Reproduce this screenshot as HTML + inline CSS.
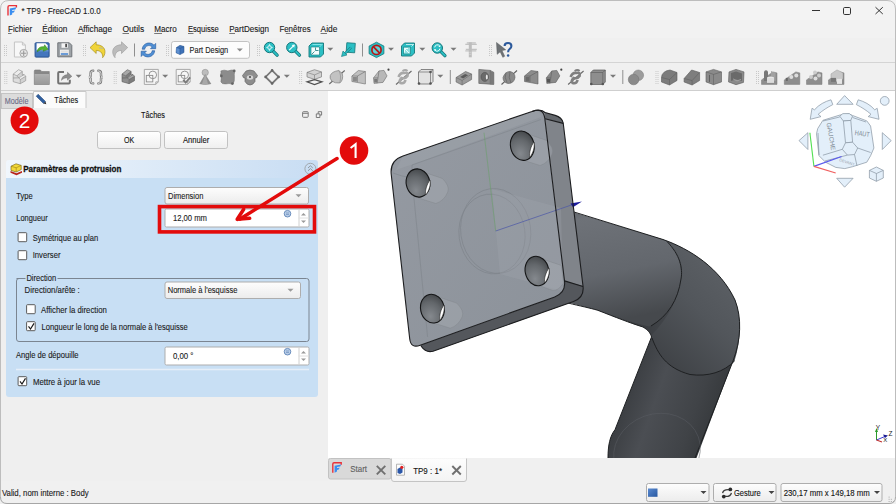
<!DOCTYPE html>
<html><head><meta charset="utf-8"><style>
html,body{margin:0;padding:0;width:896px;height:504px;overflow:hidden;background:#f0f0f0;font-family:"Liberation Sans",sans-serif;}
svg text{font-family:"Liberation Sans",sans-serif;}
</style></head><body>
<svg width="896" height="504" viewBox="0 0 896 504" style="position:absolute;left:0;top:0" font-family="Liberation Sans, sans-serif"><rect x="0" y="0" width="896" height="504" fill="#f0f0f0" />
<rect x="0" y="0" width="896" height="20" fill="#f3f3f3" />
<rect x="0" y="20" width="896" height="18" fill="#f2f2f2" />
<rect x="0" y="38" width="896" height="52" fill="#f0f0f0" />
<line x1="0" y1="62.5" x2="896" y2="62.5" stroke="#d4d4d4" stroke-width="1" />
<line x1="0" y1="90.5" x2="896" y2="90.5" stroke="#cfcfcf" stroke-width="1" />
<rect x="0" y="91" width="328" height="390" fill="#efefef" />
<rect x="328" y="91" width="567" height="367" fill="#ffffff" />
<path d="M0.5,497 L0.5,9 Q0.5,0.5 9,0.5 L887,0.5 Q895.5,0.5 895.5,9 L895.5,497" fill="none" stroke="#bdbdbd" stroke-width="1"/>
<path d="M0.5,497 Q0.5,503.5 7,503.5 L889,503.5 Q895.5,503.5 895.5,497" fill="none" stroke="#a6a6a6" stroke-width="1"/>
<g transform="translate(0,0)"><path d="M8,15.6 V6.9 Q8,5.6 9.3,5.6 H16.4 V7.6" fill="none" stroke="#e8323a" stroke-width="1.4"/><path d="M9.8,15.6 L9.8,8.6 L16.4,7.2 L15.4,9.4 L12.2,9.9 V10.9 L14.9,10.5 L13.9,12.4 L12.2,12.8 V14.4 Z" fill="#3a8ef0"/></g>
<text x="21.4" y="14" textLength="79.3" lengthAdjust="spacingAndGlyphs" font-size="9.6" font-weight="normal" fill="#1a1a1a" stroke="#1a1a1a" stroke-width="0.12">* TP9 - FreeCAD 1.0.0</text>
<line x1="812" y1="10.5" x2="820" y2="10.5" stroke="#333" stroke-width="1" />
<rect x="843.5" y="7.5" width="7" height="7" fill="none" stroke="#333" stroke-width="1" rx="1.2" />
<line x1="875.5" y1="7.2" x2="882.8" y2="14" stroke="#333" stroke-width="1" />
<line x1="882.8" y1="7.2" x2="875.5" y2="14" stroke="#333" stroke-width="1" />
<text x="8" y="31.9" textLength="24.1" lengthAdjust="spacingAndGlyphs" font-size="8.9" font-weight="normal" fill="#1a1a1a" stroke="#1a1a1a" stroke-width="0.12">Fichier</text>
<text x="42.2" y="31.9" textLength="25.1" lengthAdjust="spacingAndGlyphs" font-size="8.9" font-weight="normal" fill="#1a1a1a" stroke="#1a1a1a" stroke-width="0.12">Édition</text>
<text x="77.9" y="31.9" textLength="34.1" lengthAdjust="spacingAndGlyphs" font-size="8.9" font-weight="normal" fill="#1a1a1a" stroke="#1a1a1a" stroke-width="0.12">Affichage</text>
<text x="122.5" y="31.9" textLength="21.7" lengthAdjust="spacingAndGlyphs" font-size="8.9" font-weight="normal" fill="#1a1a1a" stroke="#1a1a1a" stroke-width="0.12">Outils</text>
<text x="154.2" y="31.9" textLength="22.5" lengthAdjust="spacingAndGlyphs" font-size="8.9" font-weight="normal" fill="#1a1a1a" stroke="#1a1a1a" stroke-width="0.12">Macro</text>
<text x="188" y="31.9" textLength="30.8" lengthAdjust="spacingAndGlyphs" font-size="8.9" font-weight="normal" fill="#1a1a1a" stroke="#1a1a1a" stroke-width="0.12">Esquisse</text>
<text x="229.2" y="31.9" textLength="39.8" lengthAdjust="spacingAndGlyphs" font-size="8.9" font-weight="normal" fill="#1a1a1a" stroke="#1a1a1a" stroke-width="0.12">PartDesign</text>
<text x="279.4" y="31.9" textLength="31.2" lengthAdjust="spacingAndGlyphs" font-size="8.9" font-weight="normal" fill="#1a1a1a" stroke="#1a1a1a" stroke-width="0.12">Fenêtres</text>
<text x="320.6" y="31.9" textLength="16.7" lengthAdjust="spacingAndGlyphs" font-size="8.9" font-weight="normal" fill="#1a1a1a" stroke="#1a1a1a" stroke-width="0.12">Aide</text>
<line x1="8" y1="33.5" x2="11.5" y2="33.5" stroke="#6a6a6a" stroke-width="0.9" />
<line x1="42.2" y1="33.5" x2="47.5" y2="33.5" stroke="#6a6a6a" stroke-width="0.9" />
<line x1="77.9" y1="33.5" x2="84" y2="33.5" stroke="#6a6a6a" stroke-width="0.9" />
<line x1="122.5" y1="33.5" x2="129" y2="33.5" stroke="#6a6a6a" stroke-width="0.9" />
<line x1="154.2" y1="33.5" x2="162" y2="33.5" stroke="#6a6a6a" stroke-width="0.9" />
<line x1="188" y1="33.5" x2="193.5" y2="33.5" stroke="#6a6a6a" stroke-width="0.9" />
<line x1="229.2" y1="33.5" x2="235" y2="33.5" stroke="#6a6a6a" stroke-width="0.9" />
<line x1="285.8" y1="33.5" x2="290.8" y2="33.5" stroke="#6a6a6a" stroke-width="0.9" />
<line x1="320.6" y1="33.5" x2="327" y2="33.5" stroke="#6a6a6a" stroke-width="0.9" />
<rect x="4" y="45" width="1" height="1" fill="#c8c8c8" />
<rect x="6" y="45" width="1" height="1" fill="#c8c8c8" />
<rect x="4" y="47" width="1" height="1" fill="#c8c8c8" />
<rect x="6" y="47" width="1" height="1" fill="#c8c8c8" />
<rect x="4" y="49" width="1" height="1" fill="#c8c8c8" />
<rect x="6" y="49" width="1" height="1" fill="#c8c8c8" />
<rect x="4" y="51" width="1" height="1" fill="#c8c8c8" />
<rect x="6" y="51" width="1" height="1" fill="#c8c8c8" />
<rect x="4" y="53" width="1" height="1" fill="#c8c8c8" />
<rect x="6" y="53" width="1" height="1" fill="#c8c8c8" />
<rect x="4" y="55" width="1" height="1" fill="#c8c8c8" />
<rect x="6" y="55" width="1" height="1" fill="#c8c8c8" />
<rect x="83" y="45" width="1" height="1" fill="#c8c8c8" />
<rect x="85" y="45" width="1" height="1" fill="#c8c8c8" />
<rect x="83" y="47" width="1" height="1" fill="#c8c8c8" />
<rect x="85" y="47" width="1" height="1" fill="#c8c8c8" />
<rect x="83" y="49" width="1" height="1" fill="#c8c8c8" />
<rect x="85" y="49" width="1" height="1" fill="#c8c8c8" />
<rect x="83" y="51" width="1" height="1" fill="#c8c8c8" />
<rect x="85" y="51" width="1" height="1" fill="#c8c8c8" />
<rect x="83" y="53" width="1" height="1" fill="#c8c8c8" />
<rect x="85" y="53" width="1" height="1" fill="#c8c8c8" />
<rect x="83" y="55" width="1" height="1" fill="#c8c8c8" />
<rect x="85" y="55" width="1" height="1" fill="#c8c8c8" />
<rect x="166" y="45" width="1" height="1" fill="#c8c8c8" />
<rect x="168" y="45" width="1" height="1" fill="#c8c8c8" />
<rect x="166" y="47" width="1" height="1" fill="#c8c8c8" />
<rect x="168" y="47" width="1" height="1" fill="#c8c8c8" />
<rect x="166" y="49" width="1" height="1" fill="#c8c8c8" />
<rect x="168" y="49" width="1" height="1" fill="#c8c8c8" />
<rect x="166" y="51" width="1" height="1" fill="#c8c8c8" />
<rect x="168" y="51" width="1" height="1" fill="#c8c8c8" />
<rect x="166" y="53" width="1" height="1" fill="#c8c8c8" />
<rect x="168" y="53" width="1" height="1" fill="#c8c8c8" />
<rect x="166" y="55" width="1" height="1" fill="#c8c8c8" />
<rect x="168" y="55" width="1" height="1" fill="#c8c8c8" />
<rect x="257" y="45" width="1" height="1" fill="#c8c8c8" />
<rect x="259" y="45" width="1" height="1" fill="#c8c8c8" />
<rect x="257" y="47" width="1" height="1" fill="#c8c8c8" />
<rect x="259" y="47" width="1" height="1" fill="#c8c8c8" />
<rect x="257" y="49" width="1" height="1" fill="#c8c8c8" />
<rect x="259" y="49" width="1" height="1" fill="#c8c8c8" />
<rect x="257" y="51" width="1" height="1" fill="#c8c8c8" />
<rect x="259" y="51" width="1" height="1" fill="#c8c8c8" />
<rect x="257" y="53" width="1" height="1" fill="#c8c8c8" />
<rect x="259" y="53" width="1" height="1" fill="#c8c8c8" />
<rect x="257" y="55" width="1" height="1" fill="#c8c8c8" />
<rect x="259" y="55" width="1" height="1" fill="#c8c8c8" />
<rect x="489" y="45" width="1" height="1" fill="#c8c8c8" />
<rect x="491" y="45" width="1" height="1" fill="#c8c8c8" />
<rect x="489" y="47" width="1" height="1" fill="#c8c8c8" />
<rect x="491" y="47" width="1" height="1" fill="#c8c8c8" />
<rect x="489" y="49" width="1" height="1" fill="#c8c8c8" />
<rect x="491" y="49" width="1" height="1" fill="#c8c8c8" />
<rect x="489" y="51" width="1" height="1" fill="#c8c8c8" />
<rect x="491" y="51" width="1" height="1" fill="#c8c8c8" />
<rect x="489" y="53" width="1" height="1" fill="#c8c8c8" />
<rect x="491" y="53" width="1" height="1" fill="#c8c8c8" />
<rect x="489" y="55" width="1" height="1" fill="#c8c8c8" />
<rect x="491" y="55" width="1" height="1" fill="#c8c8c8" />
<line x1="134.5" y1="43.5" x2="134.5" y2="56.5" stroke="#8f8f8f" stroke-width="1" />
<line x1="362.5" y1="43.5" x2="362.5" y2="56.5" stroke="#8f8f8f" stroke-width="1" />
<g transform="translate(13.9,41.5)"><path d="M0.5,0.5 h8 l3,3 v12 h-11z" fill="#f7f7f7" stroke="#c4c4c4"/><path d="M8.5,0.5 v3 h3" fill="none" stroke="#c4c4c4"/><circle cx="9.8" cy="11.7" r="3.8" fill="#e8e8e8" stroke="#a8a8a8"/><path d="M9.8,9 v5.4 M7.1,11.7 h5.4" stroke="#9a9a9a" stroke-width="1.1"/></g>
<g transform="translate(34.6,42.3)"><rect x="0.5" y="0.5" width="14" height="14.3" fill="#4476bd" stroke="#27518f" rx="0.8"/><path d="M2,1 h9 l2,2 v5 h-11z" fill="#ffffff"/><path d="M1,8.6 h13" stroke="#6a9ad6"/><path d="M2.5,8.5 q2,-5 7,-4 l0.5,-2 l3.5,4.5 l-5,2 l0.5,-1.8 q-3,-0.5 -6.5,2.3z" fill="#52b432" stroke="#2f7a1a" stroke-width="0.5"/></g>
<g transform="translate(57.3,42.3)"><path d="M0.5,0.5 h11.5 l2.5,2.5 v11.5 h-14z" fill="#9ea3a7" stroke="#6f7478"/><rect x="4.2" y="1" width="6.3" height="4.5" fill="#f4f4f4"/><rect x="8" y="1.5" width="1.6" height="3.4" fill="#3c3c3c"/><rect x="2.7" y="7.4" width="8.8" height="5.3" fill="#f2f2f2"/><rect x="3.5" y="10.9" width="7.3" height="1.6" fill="#4a86d0"/><path d="M3.5,8.8 h7 M3.5,9.8 h7" stroke="#c8c8c8" stroke-width="0.5"/></g>
<g transform="translate(90,41.8)"><path d="M0,5.8 L6.2,0 V3 C11,3 15,5.5 15,10 C15,12.5 14,14.5 12.6,15.9 C13,12.5 11.5,8.8 6.2,8.6 V11.7Z" fill="#f0d43a" stroke="#9c8412" stroke-width="0.6"/><path d="M9,6 l4,0.5" stroke="#b8b8a0" stroke-width="1"/></g>
<g transform="translate(111.8,41.8)"><path d="M15.9,5.8 L9.7,0 V3 C4.9,3 0.9,5.5 0.9,10 C0.9,12.5 1.9,14.5 3.3,15.9 C2.9,12.5 4.4,8.8 9.7,8.6 V11.7Z" fill="#bcbcbc" stroke="#9a9a9a" stroke-width="0.6"/></g>
<g transform="translate(141,42.2)"><path d="M1.2,7 C1.5,3 5,0.5 8.5,0.8 C10.5,1 12,1.8 13,3 L14.7,1.2 V6.5 H9.5 L11.2,4.8 C10,3.6 8.5,3.2 7.2,3.4 C5,3.8 3.8,5.5 3.8,7Z" fill="#4f8fd4" stroke="#23589e" stroke-width="0.6"/><path d="M13.7,8.5 C13.4,12.5 9.9,15 6.4,14.7 C4.4,14.5 2.9,13.7 1.9,12.5 L0.2,14.3 V9 H5.4 L3.7,10.7 C4.9,11.9 6.4,12.3 7.7,12.1 C9.9,11.7 11.1,10 11.1,8.5Z" fill="#4f8fd4" stroke="#23589e" stroke-width="0.6"/></g>
<rect x="171.5" y="41.5" width="78" height="16.8" fill="#fcfcfc" stroke="#c2c2c2" stroke-width="1" rx="2.2" />
<g transform="translate(175.5,45)"><path d="M1,2.5 L4.5,0.3 L8.5,1.5 V7.5 L4.5,9.6 L0.5,7.8Z" fill="#3f72b8" stroke="#24508a" stroke-width="0.5"/><path d="M4.5,3.5 L8.5,1.5 M4.5,3.5 V9.6 M4.5,3.5 L1,2.5" stroke="#2a5a9a" stroke-width="0.6" fill="none"/><path d="M1,3 L4,4 V9 L1,7.5z" fill="#5d8fd0"/></g>
<text x="189.6" y="53" textLength="38.6" lengthAdjust="spacingAndGlyphs" font-size="9.6" font-weight="normal" fill="#1a1a1a" stroke="#1a1a1a" stroke-width="0.12">Part Design</text>
<path d="M236.8,48.5 h6 l-3,3z" fill="#8a8a8a"/>
<g transform="translate(263.9,41.9)"><path d="M8.5,8.5 L13.2,13.2" stroke="#16777b" stroke-width="3.4" stroke-linecap="round"/><path d="M8.5,8.5 L13.2,13.2" stroke="#2bbfc4" stroke-width="1.8" stroke-linecap="round"/><circle cx="5.6" cy="5.6" r="5.2" fill="#2bbfc4" stroke="#16777b" stroke-width="1"/><path d="M5.6,2.2 l1.3,1.6 h-2.6z M5.6,9 l1.3,-1.6 h-2.6z M2.2,5.6 l1.6,1.3 v-2.6z M9,5.6 l-1.6,1.3 v-2.6z" fill="#e4fbfb"/><circle cx="5.6" cy="5.6" r="1.6" fill="none" stroke="#e4fbfb" stroke-width="0.8"/></g>
<g transform="translate(286.2,41.9)"><path d="M8.5,8.5 L13.2,13.2" stroke="#16777b" stroke-width="3.4" stroke-linecap="round"/><path d="M8.5,8.5 L13.2,13.2" stroke="#2bbfc4" stroke-width="1.8" stroke-linecap="round"/><circle cx="5.6" cy="5.6" r="5.2" fill="#2bbfc4" stroke="#16777b" stroke-width="1"/><path d="M3,8.2 L8,3.2" stroke="#f0ffff" stroke-width="1.2"/><path d="M8.6,2.6 l-3.2,0.6 l2.6,2.6z" fill="#f0ffff"/></g>
<g transform="translate(308.5,42.5)"><path d="M0.5,3.5 L3.5,0.5 H15 V11.5 L12,14.5 H0.5Z" fill="#2bbfc4" stroke="#16777b" stroke-width="0.9"/><path d="M2.5,4.5 H11 V12.5 H2.5Z" fill="#f2fdfd" stroke="#16777b" stroke-width="0.6"/><path d="M3,12 L6,9 M7,5 V8 H10" stroke="#16777b" stroke-width="0.8" fill="none"/><path d="M11,4.5 L14,1.5 M4,2 H13" stroke="#bff" stroke-width="0.6"/></g>
<path d="M327.3,47.7 h6 l-3,3z" fill="#7a7a7a"/>
<g transform="translate(341.5,42.5)"><path d="M5,0.5 H13.5 V10 H5z" fill="#2bbfc4" stroke="#16777b" stroke-width="0.8" transform="rotate(4 9 5)"/><path d="M9.5,5 L2.5,12" stroke="#16777b" stroke-width="2.4"/><path d="M9.5,5 L2.5,12" stroke="#2bbfc4" stroke-width="1.2"/><path d="M0,14 L1.5,8.5 L5.5,12.5Z" fill="#2bbfc4" stroke="#16777b" stroke-width="0.6"/></g>
<g transform="translate(368.7,41.9)"><path d="M7.8,0.3 L15.2,4.2 V11.8 L7.8,15.7 L0.4,11.8 V4.2Z" fill="#2bbfc4" stroke="#16777b" stroke-width="0.8"/><circle cx="7.8" cy="8" r="4.6" fill="#5fd3d6" stroke="#b81616" stroke-width="1.7"/><path d="M4.6,4.8 L11,11.2" stroke="#b81616" stroke-width="1.7"/></g>
<path d="M388,47.7 h6 l-3,3z" fill="#7a7a7a"/>
<g transform="translate(401,42.5)"><path d="M0.5,3.5 L3.5,0.5 H13.5 V10.5 L10.5,13.5 H0.5Z" fill="#2bbfc4" stroke="#16777b" stroke-width="0.9"/><path d="M2.5,4.5 H9.5 V11.5 H2.5Z" fill="#8fe0e2" stroke="#16777b" stroke-width="0.6"/><path d="M3.5,6 L8,10.5 M3.5,10 L3.5,6 L7,6" stroke="#f2ffff" stroke-width="0.9" fill="none"/><path d="M10.5,4 L13,1.5 M5,2 H12" stroke="#f2ffff" stroke-width="0.7"/></g>
<path d="M419.3,47.7 h6 l-3,3z" fill="#7a7a7a"/>
<g transform="translate(431.7,42.4)"><path d="M8.5,8.5 L13.2,13.2" stroke="#16777b" stroke-width="3.4" stroke-linecap="round"/><path d="M8.5,8.5 L13.2,13.2" stroke="#2bbfc4" stroke-width="1.8" stroke-linecap="round"/><circle cx="5.6" cy="5.6" r="5.2" fill="#2bbfc4" stroke="#16777b" stroke-width="1"/><path d="M3,5 a2.8,2.8 0 0 1 5,-1.5 M8.2,6.2 a2.8,2.8 0 0 1 -5,1.5" stroke="#f0ffff" stroke-width="1" fill="none"/><path d="M8.6,2.5 v2 h-2z M2.6,8.7 v-2 h2z" fill="#f0ffff"/></g>
<path d="M450.5,47.7 h6 l-3,3z" fill="#7a7a7a"/>
<g transform="translate(464.8,41.3)"><path d="M2,1.5 h9 M0.5,3 h11.5 M1,8 h11 M0.5,9.5 h11" stroke="#c2c2c2" stroke-width="1.2"/><path d="M5.5,1 v15" stroke="#bdbdbd" stroke-width="3"/><path d="M4.5,11 h2 M4.5,13 h2" stroke="#e0e0e0" stroke-width="0.6"/></g>
<g transform="translate(496,42)"><path d="M0.5,0.5 L9.7,7.8 L6,8.6 L8.7,14.2 L6.8,15.3 L4.2,9.8 L1.2,12.3Z" fill="#6e7275" stroke="#575a5d" stroke-width="0.5"/></g>
<path d="M504.6,46 Q504.6,43 508,43 Q511.4,43 511.4,46 Q511.4,48 509.6,49 Q508.1,50 508.1,52.3" fill="none" stroke="#2d5a9c" stroke-width="2.1"/><circle cx="508.1" cy="55.4" r="1.25" fill="#2d5a9c"/>
<rect x="4.3" y="71" width="1" height="1" fill="#c8c8c8" />
<rect x="6.3" y="71" width="1" height="1" fill="#c8c8c8" />
<rect x="4.3" y="73" width="1" height="1" fill="#c8c8c8" />
<rect x="6.3" y="73" width="1" height="1" fill="#c8c8c8" />
<rect x="4.3" y="75" width="1" height="1" fill="#c8c8c8" />
<rect x="6.3" y="75" width="1" height="1" fill="#c8c8c8" />
<rect x="4.3" y="77" width="1" height="1" fill="#c8c8c8" />
<rect x="6.3" y="77" width="1" height="1" fill="#c8c8c8" />
<rect x="4.3" y="79" width="1" height="1" fill="#c8c8c8" />
<rect x="6.3" y="79" width="1" height="1" fill="#c8c8c8" />
<rect x="4.3" y="81" width="1" height="1" fill="#c8c8c8" />
<rect x="6.3" y="81" width="1" height="1" fill="#c8c8c8" />
<rect x="4.3" y="83" width="1" height="1" fill="#c8c8c8" />
<rect x="6.3" y="83" width="1" height="1" fill="#c8c8c8" />
<rect x="113.7" y="71" width="1" height="1" fill="#c8c8c8" />
<rect x="115.7" y="71" width="1" height="1" fill="#c8c8c8" />
<rect x="113.7" y="73" width="1" height="1" fill="#c8c8c8" />
<rect x="115.7" y="73" width="1" height="1" fill="#c8c8c8" />
<rect x="113.7" y="75" width="1" height="1" fill="#c8c8c8" />
<rect x="115.7" y="75" width="1" height="1" fill="#c8c8c8" />
<rect x="113.7" y="77" width="1" height="1" fill="#c8c8c8" />
<rect x="115.7" y="77" width="1" height="1" fill="#c8c8c8" />
<rect x="113.7" y="79" width="1" height="1" fill="#c8c8c8" />
<rect x="115.7" y="79" width="1" height="1" fill="#c8c8c8" />
<rect x="113.7" y="81" width="1" height="1" fill="#c8c8c8" />
<rect x="115.7" y="81" width="1" height="1" fill="#c8c8c8" />
<rect x="113.7" y="83" width="1" height="1" fill="#c8c8c8" />
<rect x="115.7" y="83" width="1" height="1" fill="#c8c8c8" />
<rect x="299.1" y="71" width="1" height="1" fill="#c8c8c8" />
<rect x="301.1" y="71" width="1" height="1" fill="#c8c8c8" />
<rect x="299.1" y="73" width="1" height="1" fill="#c8c8c8" />
<rect x="301.1" y="73" width="1" height="1" fill="#c8c8c8" />
<rect x="299.1" y="75" width="1" height="1" fill="#c8c8c8" />
<rect x="301.1" y="75" width="1" height="1" fill="#c8c8c8" />
<rect x="299.1" y="77" width="1" height="1" fill="#c8c8c8" />
<rect x="301.1" y="77" width="1" height="1" fill="#c8c8c8" />
<rect x="299.1" y="79" width="1" height="1" fill="#c8c8c8" />
<rect x="301.1" y="79" width="1" height="1" fill="#c8c8c8" />
<rect x="299.1" y="81" width="1" height="1" fill="#c8c8c8" />
<rect x="301.1" y="81" width="1" height="1" fill="#c8c8c8" />
<rect x="299.1" y="83" width="1" height="1" fill="#c8c8c8" />
<rect x="301.1" y="83" width="1" height="1" fill="#c8c8c8" />
<rect x="655.5" y="71" width="1" height="1" fill="#c8c8c8" />
<rect x="657.5" y="71" width="1" height="1" fill="#c8c8c8" />
<rect x="655.5" y="73" width="1" height="1" fill="#c8c8c8" />
<rect x="657.5" y="73" width="1" height="1" fill="#c8c8c8" />
<rect x="655.5" y="75" width="1" height="1" fill="#c8c8c8" />
<rect x="657.5" y="75" width="1" height="1" fill="#c8c8c8" />
<rect x="655.5" y="77" width="1" height="1" fill="#c8c8c8" />
<rect x="657.5" y="77" width="1" height="1" fill="#c8c8c8" />
<rect x="655.5" y="79" width="1" height="1" fill="#c8c8c8" />
<rect x="657.5" y="79" width="1" height="1" fill="#c8c8c8" />
<rect x="655.5" y="81" width="1" height="1" fill="#c8c8c8" />
<rect x="657.5" y="81" width="1" height="1" fill="#c8c8c8" />
<rect x="655.5" y="83" width="1" height="1" fill="#c8c8c8" />
<rect x="657.5" y="83" width="1" height="1" fill="#c8c8c8" />
<rect x="756" y="71" width="1" height="1" fill="#c8c8c8" />
<rect x="758" y="71" width="1" height="1" fill="#c8c8c8" />
<rect x="756" y="73" width="1" height="1" fill="#c8c8c8" />
<rect x="758" y="73" width="1" height="1" fill="#c8c8c8" />
<rect x="756" y="75" width="1" height="1" fill="#c8c8c8" />
<rect x="758" y="75" width="1" height="1" fill="#c8c8c8" />
<rect x="756" y="77" width="1" height="1" fill="#c8c8c8" />
<rect x="758" y="77" width="1" height="1" fill="#c8c8c8" />
<rect x="756" y="79" width="1" height="1" fill="#c8c8c8" />
<rect x="758" y="79" width="1" height="1" fill="#c8c8c8" />
<rect x="756" y="81" width="1" height="1" fill="#c8c8c8" />
<rect x="758" y="81" width="1" height="1" fill="#c8c8c8" />
<rect x="756" y="83" width="1" height="1" fill="#c8c8c8" />
<rect x="758" y="83" width="1" height="1" fill="#c8c8c8" />
<line x1="450.3" y1="70" x2="450.3" y2="84" stroke="#8f8f8f" stroke-width="1" />
<line x1="622.8" y1="70" x2="622.8" y2="84" stroke="#8f8f8f" stroke-width="1" />
<g transform="translate(12.9,69.5)"><path d="M0.3,4.6 L5.7,0.2 L9.4,1.9 L4,6.3Z" fill="#ececec"/><path d="M4,6.3 L9.4,1.9 V5.6 L5.9,8.3Z" fill="#d2d2d2"/><path d="M5.9,8.3 L11.3,5.0 L12.8,6.8 L7.4,10Z" fill="#ececec"/><path d="M7.4,10 L12.8,6.8 V11.2 L7.4,14.2Z" fill="#d2d2d2"/><path d="M0.3,4.6 L4,6.3 L5.9,8.3 L7.4,10 V14.2 L0.3,12.2Z" fill="#dedede"/><path d="M0.3,4.6 L5.7,0.2 L9.4,1.9 V5.6 L11.3,5.0 L12.8,6.8 V11.2 L7.4,14.2 L0.3,12.2Z M0.3,4.6 L4,6.3 L9.4,1.9 M4,6.3 L5.9,8.3 L11.3,5.0 M5.9,8.3 L7.4,10 L12.8,6.8 M7.4,10 V14.2 M0.3,8.5 L5.9,8.3" fill="none" stroke="#8a8a8a" stroke-width="0.6" stroke-linejoin="round"/></g>
<g transform="translate(33.8,69.5)"><defs><linearGradient id="fold" x1="0" x2="0" y1="0" y2="1"><stop offset="0" stop-color="#b0b0b0"/><stop offset="1" stop-color="#999"/></linearGradient></defs><path d="M0.5,1.5 Q0.5,0.5 1.5,0.5 H6.5 L8,2 H15.5 V15 H0.5Z" fill="#878787" stroke="#7a7a7a" stroke-width="0.6"/><path d="M0.8,4.5 H15.3 V14.8 H0.8z" fill="url(#fold)"/></g>
<g transform="translate(57,70.8)"><path d="M7,1.2 H2.2 Q1.2,1.2 1.2,2.2 V11.8 Q1.2,12.8 2.2,12.8 H11.8 Q12.8,12.8 12.8,11.8 V9" fill="none" stroke="#727272" stroke-width="2"/><path d="M4.5,9.5 C5,5.5 7.5,4 10.5,4 V1.5 L14.8,5.5 L10.5,9.3 V7 C8,7 6,7.7 4.5,9.5Z" fill="#8e8e8e" stroke="#6a6a6a" stroke-width="0.5"/></g>
<path d="M75.6,74.8 h6 l-3,3z" fill="#7a7a7a"/>
<path d="M93.2,70.8 Q90.6,70.8 90.6,73.2 V75.5 Q90.6,77 88.9,77.1 Q90.6,77.2 90.6,78.7 V81 Q90.6,83.4 93.2,83.4 M98.4,70.8 Q101,70.8 101,73.2 V75.5 Q101,77 102.7,77.1 Q101,77.2 101,78.7 V81 Q101,83.4 98.4,83.4" fill="none" stroke="#767676" stroke-width="2.4" stroke-linecap="round"/><path d="M93.2,70.8 Q90.6,70.8 90.6,73.2 V75.5 Q90.6,77 88.9,77.1 Q90.6,77.2 90.6,78.7 V81 Q90.6,83.4 93.2,83.4 M98.4,70.8 Q101,70.8 101,73.2 V75.5 Q101,77 102.7,77.1 Q101,77.2 101,78.7 V81 Q101,83.4 98.4,83.4" fill="none" stroke="#e6e6e6" stroke-width="0.9" stroke-linecap="round"/>
<g transform="translate(121.7,69.5)"><path d="M0.3,4.6 L5.7,0.2 L9.4,1.9 L4,6.3Z" fill="#a8a8a8"/><path d="M4,6.3 L9.4,1.9 V5.6 L5.9,8.3Z" fill="#7c7c7c"/><path d="M5.9,8.3 L11.3,5.0 L12.8,6.8 L7.4,10Z" fill="#a8a8a8"/><path d="M7.4,10 L12.8,6.8 V11.2 L7.4,14.2Z" fill="#7c7c7c"/><path d="M0.3,4.6 L4,6.3 L5.9,8.3 L7.4,10 V14.2 L0.3,12.2Z" fill="#8e8e8e"/><path d="M0.3,4.6 L5.7,0.2 L9.4,1.9 V5.6 L11.3,5.0 L12.8,6.8 V11.2 L7.4,14.2 L0.3,12.2Z M0.3,4.6 L4,6.3 L9.4,1.9 M4,6.3 L5.9,8.3 L11.3,5.0 M5.9,8.3 L7.4,10 L12.8,6.8 M7.4,10 V14.2 M0.3,8.5 L5.9,8.3" fill="none" stroke="#5a5a5a" stroke-width="0.6" stroke-linejoin="round"/></g>
<g transform="translate(143.8,68.9)"><path d="M0.5,0.5 H14.5 V13 L12,15.5 H0.5Z" fill="#f6f6f6" stroke="#a8a8a8"/><path d="M12,15.5 V13 H14.5" fill="none" stroke="#a8a8a8"/><rect x="2.5" y="6.5" width="6.5" height="6.5" fill="none" stroke="#8c8c8c" stroke-width="0.9"/><circle cx="9" cy="6" r="3.8" fill="none" stroke="#8c8c8c" stroke-width="0.9"/></g>
<path d="M162.2,74.8 h6 l-3,3z" fill="#7a7a7a"/>
<g transform="translate(175.7,68.9)"><path d="M0.5,0.5 H14.5 V13 L12,15.5 H0.5Z" fill="#f6f6f6" stroke="#a8a8a8"/><path d="M12,15.5 V13 H14.5" fill="none" stroke="#a8a8a8"/><rect x="2.5" y="6.5" width="6.5" height="6.5" fill="none" stroke="#8c8c8c" stroke-width="0.9"/><circle cx="9" cy="6" r="3.8" fill="none" stroke="#8c8c8c" stroke-width="0.9"/><path d="M7.5,11 L10,13.8 L14.5,8.5" stroke="#7a7a7a" stroke-width="1.8" fill="none"/></g>
<g transform="translate(199,68.9)"><circle cx="6.2" cy="3.6" r="3.2" fill="#bdbdbd" stroke="#8a8a8a" stroke-width="0.5"/><path d="M6.2,5 L0.3,15 Q6.2,16.5 12.3,15Z" fill="#8f8f8f"/><path d="M6.2,5 L3,15 Q6.2,16 9,15Z" fill="#a8a8a8"/></g>
<g transform="translate(219.9,68.9)"><path d="M1,2 Q4,0.5 8,2 Q12,0.5 15,1.5 Q14,6 14.5,8 Q15,12 13,15.5 Q9,14 6,15 Q2,15.5 1,13 Q2,9 0.5,6 Q1.5,4 1,2Z" fill="#8c8c8c" stroke="#6e6e6e" stroke-width="0.5"/><circle cx="14.3" cy="2" r="1.3" fill="#666"/><circle cx="1.5" cy="7" r="1.3" fill="#666"/><circle cx="12.5" cy="14.6" r="1.3" fill="#666"/></g>
<g transform="translate(242,69.5)"><path d="M4,1.5 Q8,-0.5 12,1.5 L15.5,6 Q15,9 13,8.5 V12 Q11,15.5 8,15.5 Q5,15.5 3,12 V8.5 Q1,9 0.5,6Z" fill="#8e8e8e" stroke="#5c5c5c" stroke-width="0.6"/><ellipse cx="8" cy="8" rx="3.2" ry="2.2" fill="#d4d4d4"/><circle cx="8" cy="7.6" r="1" fill="#444"/></g>
<g transform="translate(264.1,68.9)"><path d="M8,1.5 L14.5,8 L8,14.5 L1.5,8Z" fill="none" stroke="#787878" stroke-width="1.8"/><circle cx="8" cy="1.5" r="1.3" fill="#666"/><circle cx="14.5" cy="8" r="1.3" fill="#666"/><circle cx="8" cy="14.5" r="1.3" fill="#666"/><circle cx="1.5" cy="8" r="1.3" fill="#666"/></g>
<path d="M283.8,74.8 h6 l-3,3z" fill="#7a7a7a"/>
<g transform="translate(306.5,68.9)"><path d="M0.5,3.5 L8,0.8 L15,3 V8 L8,10.5 L0.5,8Z" fill="#d2d2d2" stroke="#6a6a6a" stroke-width="0.6"/><path d="M0.5,3.5 L8,6 L15,3 M8,6 V10.5" stroke="#6a6a6a" stroke-width="0.5" fill="none"/><path d="M0.5,13 L8,10.8 L15.5,13 L8,15.7Z" fill="#f2f2f2" stroke="#505050" stroke-width="1.2"/></g>
<g transform="translate(328.75,69)"><path d="M0.5,15 L16,1.5" stroke="#6a6a6a" stroke-width="1.1"/><path d="M1.5,6.5 Q3,2.5 10,1.5 L13.5,4.5 Q15,11 11,14 Q6,14.5 3,12 Q0.5,9 1.5,6.5Z" fill="#c2c2c2" stroke="#707070" stroke-width="0.6"/><path d="M10,1.5 Q13,6 11,14" fill="none" stroke="#8a8a8a" stroke-width="0.6"/></g>
<g transform="translate(351.4,69.5)"><path d="M0.5,6.5 L7,1 L14,2 V14.5 L0.5,12Z" fill="#c0c0c0" stroke="#6c6c6c" stroke-width="0.6"/><path d="M0.5,6.5 H6 V12.5 M6,6.5 L14,2" stroke="#6c6c6c" stroke-width="0.6" fill="none"/><rect x="1.5" y="7.5" width="4" height="4.5" fill="#8a8a8a"/></g>
<g transform="translate(373,68.9)"><path d="M0.5,9 L6,2 L11,1.5 L14,7 L10,13.5 L1,14.5Z" fill="#b8b8b8" stroke="#6c6c6c" stroke-width="0.6"/><path d="M0.5,9 H5 L6,2 M5,9 L4,14.5" stroke="#6c6c6c" stroke-width="0.6" fill="none"/><rect x="1.2" y="10" width="3" height="3.5" fill="#7a7a7a"/><circle cx="15.5" cy="0.8" r="1.1" fill="#444"/></g>
<g transform="translate(395.5,69)"><path d="M0.5,15.5 L16,2" stroke="#6a6a6a" stroke-width="1.1"/><path d="M3,8 Q5,3 9,4 Q13,3 12,7 Q10,10 6,9 Q3,12 5,14 Q9,15 10,11" fill="none" stroke="#a8a8a8" stroke-width="2.6"/><path d="M7,2 Q10,0 12,2" fill="none" stroke="#a8a8a8" stroke-width="2"/></g>
<g transform="translate(418,69)"><path d="M0.5,3 L3,0.5 H15 V12.5 L12.5,15 H0.5Z" fill="#e2e2e2" stroke="#5a5a5a" stroke-width="0.7"/><path d="M0.5,3 H12.5 V15 M12.5,3 L15,0.5" stroke="#5a5a5a" stroke-width="0.6" fill="none"/><circle cx="1" cy="14.5" r="1.3" fill="#555"/><circle cx="12.5" cy="14.5" r="1.3" fill="#555"/><circle cx="12.5" cy="3" r="1.3" fill="#555"/></g>
<path d="M437.3,74.8 h6 l-3,3z" fill="#7a7a7a"/>
<g transform="translate(455.6,69.5)"><path d="M0.5,8 L10,2 L16,4.5 V10 L6.5,15.5 L0.5,12.5Z" fill="#9a9a9a" stroke="#5e5e5e" stroke-width="0.6"/><path d="M0.5,8 L6.5,11 L16,4.5 M6.5,11 V15.5" stroke="#5e5e5e" stroke-width="0.5" fill="none"/><path d="M4.5,7.5 L9.5,4.5 L12.5,5.8 L7.5,9Z" fill="#5a5a5a"/></g>
<g transform="translate(478.3,68.9)"><path d="M0.5,0.5 L12,1.5 L15.5,3.5 V15.5 L0.5,14.5Z" fill="#8c8c8c" stroke="#5a5a5a" stroke-width="0.6"/><path d="M12,1.5 V15.2" stroke="#5a5a5a" stroke-width="0.6"/><rect x="12" y="3" width="3.5" height="12.5" fill="#7a7a7a"/><ellipse cx="6.5" cy="8" rx="3.8" ry="4.5" fill="#6a6a6a" stroke="#505050" stroke-width="0.6"/><ellipse cx="8.5" cy="8" rx="1" ry="2.5" fill="#e8e8e8"/></g>
<g transform="translate(501,69.5)"><path d="M0.5,15 L16,1" stroke="#5e5e5e" stroke-width="1.1"/><path d="M2,8 Q4,2 9,2 Q14,3 14,8 Q13,14 7,14 Q2,13 2,8Z" fill="#8a8a8a" stroke="#5e5e5e" stroke-width="0.6"/><path d="M5,3 Q3,8 6,13 M9,2.3 Q7,8 10,13.5" fill="none" stroke="#5e5e5e" stroke-width="0.6"/></g>
<g transform="translate(524,69.5)"><path d="M0.5,6.5 L7,1 L14,2 V14.5 L0.5,12Z" fill="#8c8c8c" stroke="#5e5e5e" stroke-width="0.6"/><path d="M0.5,6.5 H6 V12.5 M6,6.5 L14,2" stroke="#5e5e5e" stroke-width="0.6" fill="none"/><rect x="1.5" y="7.5" width="4" height="4.5" fill="#6a6a6a"/></g>
<g transform="translate(545.8,68.9)"><path d="M0.5,9 L6,2 L11,1.5 L14,7 L10,13.5 L1,14.5Z" fill="#8a8a8a" stroke="#5e5e5e" stroke-width="0.6"/><path d="M0.5,9 H5 L6,2 M5,9 L4,14.5" stroke="#5e5e5e" stroke-width="0.6" fill="none"/><rect x="1.2" y="10" width="3" height="3.5" fill="#555"/><circle cx="15.5" cy="0.8" r="1.1" fill="#444"/></g>
<g transform="translate(567.6,69)"><path d="M0.5,15.5 L16,2" stroke="#6a6a6a" stroke-width="1.1"/><path d="M3,8 Q5,3 9,4 Q13,3 12,7 Q10,10 6,9 Q3,12 5,14 Q9,15 10,11" fill="none" stroke="#808080" stroke-width="2.6"/><path d="M7,2 Q10,0 12,2" fill="none" stroke="#808080" stroke-width="2"/></g>
<g transform="translate(590.3,69.5)"><path d="M0.5,3 L3,0.5 H15 V12.5 L12.5,15 H0.5Z" fill="#8e8e8e" stroke="#5a5a5a" stroke-width="0.7"/><path d="M0.5,3 H12.5 V15 M12.5,3 L15,0.5" stroke="#5a5a5a" stroke-width="0.6" fill="none"/><circle cx="1" cy="14.5" r="1.3" fill="#555"/><circle cx="12.5" cy="14.5" r="1.3" fill="#555"/></g>
<path d="M610,74.8 h6 l-3,3z" fill="#7a7a7a"/>
<g transform="translate(627.8,69.5)"><circle cx="10.5" cy="5.8" r="5.3" fill="#9c9c9c" stroke="#7a7a7a" stroke-width="0.5"/><circle cx="5.8" cy="10" r="5.3" fill="#8a8a8a" stroke="#6e6e6e" stroke-width="0.5"/></g>
<g transform="translate(661,69.5)"><path d="M0.5,8 Q1,1.5 9,0.5 L16,3 V11 L8.5,15.5 L0.5,12.5Z" fill="#7c7c7c" stroke="#5a5a5a" stroke-width="0.6"/><path d="M0.5,8 L8.5,10 L16,3 M8.5,10 V15.5" stroke="#5a5a5a" stroke-width="0.5" fill="none"/></g>
<g transform="translate(683.6,69.5)"><path d="M0.5,9 L8,0.5 L16,3 V11 L8.5,15.5 L0.5,12.5Z" fill="#7e7e7e" stroke="#5a5a5a" stroke-width="0.6"/><path d="M0.5,9 L8.5,11 L16,3 M8.5,11 V15.5" stroke="#5a5a5a" stroke-width="0.5" fill="none"/></g>
<g transform="translate(705.5,68.9)"><path d="M0.5,3 L8,0.5 L16,3 V13 L8,15.8 L0.5,13Z" fill="#8a8a8a" stroke="#5a5a5a" stroke-width="0.6"/><path d="M0.5,3 L8,5.5 L16,3 M8,5.5 V15.8" stroke="#5a5a5a" stroke-width="0.5" fill="none"/><path d="M4,6 V13" stroke="#555" stroke-width="0.8"/></g>
<g transform="translate(728,68.9)"><path d="M1,3 L8,0.5 L16,3 L15.5,13.5 L8,15.8 L0.5,13Z" fill="#8a8a8a" stroke="#5a5a5a" stroke-width="0.6"/><path d="M3,4 L8,2.5 L14,4.5 V12 L8,10.5 L3,12Z" fill="#6a6a6a"/><path d="M5,10 L9,12 L13,10.5" fill="none" stroke="#aaa" stroke-width="0.8"/></g>
<g transform="translate(761,68.9)"><path d="M0.5,11 L12,3 L16,4 V15.5 H0.5Z" fill="#8e8e8e" stroke="#7a7a7a" stroke-width="0.5"/><path d="M3,2.5 Q5,0 7,2.5 V12 H3Z" fill="#777"/><path d="M10,2 L14.5,4 V12 L10,11Z" fill="#a2a2a2"/><ellipse cx="9.5" cy="9" rx="3.5" ry="1.5" fill="#e8e8e8"/><rect x="6" y="9" width="7" height="5" fill="#dcdcdc"/></g>
<g transform="translate(783.8,68.9)"><path d="M0.5,11 L12,3 L16,4 V15.5 H0.5Z" fill="#8e8e8e" stroke="#7a7a7a" stroke-width="0.5"/><circle cx="7.5" cy="8" r="2" fill="#ddd"/><circle cx="12.5" cy="6.5" r="2" fill="#ddd"/><rect x="2" y="9" width="2" height="3" fill="#666"/></g>
<g transform="translate(806,68.9)"><path d="M0.5,11 L12,3 L16,4 V15.5 H0.5Z" fill="#8e8e8e" stroke="#7a7a7a" stroke-width="0.5"/><circle cx="9" cy="3.5" r="2" fill="#ccc"/><circle cx="13" cy="6.5" r="2" fill="#ccc"/><circle cx="5" cy="8" r="2" fill="#ccc"/><circle cx="9.5" cy="9.5" r="2" fill="#ddd"/></g>
<g transform="translate(828,68.9)"><path d="M0.5,11 L12,3 L16,4 V15.5 H0.5Z" fill="#8e8e8e" stroke="#7a7a7a" stroke-width="0.5"/><path d="M3,5 L9,1 L15,4 V10 L9,13 L3,10Z" fill="#c8c8c8" stroke="#999" stroke-width="0.5"/><rect x="9" y="10" width="5" height="5" fill="#e6e6e6"/><rect x="3" y="9" width="5" height="4" fill="#777"/></g>
<rect x="1.5" y="93.5" width="31" height="15" fill="#dcdcdc" stroke="#c4c4c4" stroke-width="1" />
<text x="4.8" y="104" textLength="23.6" lengthAdjust="spacingAndGlyphs" font-size="9.8" font-weight="normal" fill="#6b6b86" stroke="#6b6b86" stroke-width="0.12">Modèle</text>
<path d="M33.5,108 V91.5 h52.5 V108" fill="#fbfbfb" stroke="#c9c9c9"/>
<path d="M36.2,96.2 L38.2,94.2 L45.5,101.5 L43.5,103.5Z" fill="#2f5f9f" stroke="#1d3f70" stroke-width="0.5"/><path d="M45.5,101.5 L46.3,104.3 L43.5,103.5Z" fill="#333"/>
<text x="54.2" y="102.6" textLength="23.9" lengthAdjust="spacingAndGlyphs" font-size="9.8" font-weight="normal" fill="#111" stroke="#111" stroke-width="0.12">Tâches</text>
<text x="140.9" y="117.6" textLength="24.1" lengthAdjust="spacingAndGlyphs" font-size="9.8" font-weight="normal" fill="#111" stroke="#111" stroke-width="0.12">Tâches</text>
<rect x="302.6" y="111.7" width="5.6" height="5.6" fill="none" stroke="#7a7a7a" stroke-width="1" rx="0.8" />
<line x1="302.6" y1="113.3" x2="308.2" y2="113.3" stroke="#7a7a7a" stroke-width="1" />
<path d="M316.3,113.9 h3.6 v3.6 h-3.6z M318.2,113.9 v-2.2 h3.4 v3.4 h-1.7" fill="none" stroke="#7a7a7a" stroke-width="1"/>
<defs><linearGradient id="btng" x1="0" x2="0" y1="0" y2="1"><stop offset="0" stop-color="#ffffff"/><stop offset="1" stop-color="#efefef"/></linearGradient></defs>
<rect x="97.5" y="131.5" width="63" height="17" fill="url(#btng)" stroke="#c2c2c2" stroke-width="1" rx="2.2" />
<text x="124" y="142.5" textLength="10.2" lengthAdjust="spacingAndGlyphs" font-size="9.8" font-weight="normal" fill="#111" stroke="#111" stroke-width="0.12">OK</text>
<rect x="164.5" y="131.5" width="63" height="17" fill="url(#btng)" stroke="#c2c2c2" stroke-width="1" rx="2.2" />
<text x="183" y="142.5" textLength="26.3" lengthAdjust="spacingAndGlyphs" font-size="9.8" font-weight="normal" fill="#111" stroke="#111" stroke-width="0.12">Annuler</text>
<defs><linearGradient id="hdr" x1="0" x2="1" y1="0" y2="0"><stop offset="0" stop-color="#f0f6fc"/><stop offset="1" stop-color="#c8ddf3"/></linearGradient></defs>
<path d="M6,178 V163 q0,-3 3,-3 H315 q3,0 3,3 V178z" fill="url(#hdr)"/>
<path d="M6,178 H318 V394 q0,3 -3,3 H9 q-3,0 -3,-3z" fill="#c8dff4"/>
<path d="M10.5,171 l6,2.3 l5.5,-2.3 v1.8 l-5.5,2.4 l-6,-2.4z" fill="#b8231c"/><path d="M11,166.2 l5,-2.4 l5.2,1.6 v4.2 l-5,2.4 l-5.2,-1.6z" fill="#f2d83a" stroke="#6e5a10" stroke-width="0.6"/><path d="M11,166.2 l5.2,1.6 l5,-2.4 M16.2,167.8 v4.2" fill="none" stroke="#8a7010" stroke-width="0.5"/>
<text x="23.2" y="171.7" textLength="98.3" lengthAdjust="spacingAndGlyphs" font-size="9.6" font-weight="bold" fill="#111" stroke="#111" stroke-width="0.3">Paramètres de protrusion</text>
<circle cx="310.4" cy="168.8" r="5.5" fill="none" stroke="#a2a8ae" stroke-width="1"/><path d="M308,168 l2.4,-2.2 l2.4,2.2 M308,170.8 l2.4,-2.2 l2.4,2.2" fill="none" stroke="#8a9096" stroke-width="0.9"/>
<text x="16.3" y="198.8" textLength="16.4" lengthAdjust="spacingAndGlyphs" font-size="9.8" font-weight="normal" fill="#1b1b1b" stroke="#1b1b1b" stroke-width="0.12">Type</text>
<text x="16.3" y="220.6" textLength="31.3" lengthAdjust="spacingAndGlyphs" font-size="9.8" font-weight="normal" fill="#1b1b1b" stroke="#1b1b1b" stroke-width="0.12">Longueur</text>
<rect x="18.1" y="232.7" width="8.6" height="9" fill="#ffffff" stroke="#5a5a5a" stroke-width="1" rx="0.8" />
<text x="32.7" y="240.5" textLength="65.5" lengthAdjust="spacingAndGlyphs" font-size="9.8" font-weight="normal" fill="#1b1b1b" stroke="#1b1b1b" stroke-width="0.12">Symétrique au plan</text>
<rect x="18.1" y="250.7" width="8.6" height="9" fill="#ffffff" stroke="#5a5a5a" stroke-width="1" rx="0.8" />
<text x="32.7" y="258" textLength="27.8" lengthAdjust="spacingAndGlyphs" font-size="9.8" font-weight="normal" fill="#1b1b1b" stroke="#1b1b1b" stroke-width="0.12">Inverser</text>
<defs><linearGradient id="cg187" x1="0" x2="0" y1="0" y2="1"><stop offset="0" stop-color="#fdfdfd"/><stop offset="1" stop-color="#ececec"/></linearGradient></defs>
<rect x="165.0" y="187.5" width="143.5" height="16.5" fill="url(#cg187)" stroke="#adadad" stroke-width="1" rx="2" />
<text x="168" y="199" textLength="35.3" lengthAdjust="spacingAndGlyphs" font-size="9.8" font-weight="normal" fill="#1b1b1b" stroke="#1b1b1b" stroke-width="0.12">Dimension</text>
<path d="M295.5,194.25 h6 l-3,3z" fill="#9a9a9a"/>
<rect x="165.0" y="209.0" width="144" height="18" fill="#ffffff" stroke="#adadad" stroke-width="1" rx="1.5" />
<line x1="299.0" y1="209.5" x2="299.0" y2="226.5" stroke="#d0d0d0" stroke-width="1" />
<line x1="298.5" y1="218.0" x2="308.5" y2="218.0" stroke="#e0e0e0" stroke-width="1" />
<path d="M301.0,215.5 l2.5,-2.5 l2.5,2.5z" fill="#9a9a9a"/><path d="M301.0,220.5 l2.5,2.5 l2.5,-2.5z" fill="#9a9a9a"/>
<circle cx="287.5" cy="213.7" r="3.3" fill="#b9cde6" stroke="#5f84b8" stroke-width="0.9"/><path d="M286.0,213.0 h3 M286.0,214.5 h3" stroke="#5f84b8" stroke-width="0.6"/>
<text x="172.9" y="220.8" textLength="34.1" lengthAdjust="spacingAndGlyphs" font-size="9.8" font-weight="normal" fill="#1b1b1b" stroke="#1b1b1b" stroke-width="0.12">12,00 mm</text>
<path d="M16.5,278.5 h9" stroke="#7b8591"/><path d="M57.5,278.5 H306.5 q2.5,0 2.5,2.5 V339 q0,2.5 -2.5,2.5 H19 q-2.5,0 -2.5,-2.5 V281 q0,-2.5 2.5,-2.5" fill="none" stroke="#7b8591"/>
<text x="26.4" y="280.7" textLength="29.8" lengthAdjust="spacingAndGlyphs" font-size="9.8" font-weight="normal" fill="#1b1b1b" stroke="#1b1b1b" stroke-width="0.12">Direction</text>
<text x="24.6" y="293.2" textLength="55.2" lengthAdjust="spacingAndGlyphs" font-size="9.8" font-weight="normal" fill="#1b1b1b" stroke="#1b1b1b" stroke-width="0.12">Direction/arête :</text>
<defs><linearGradient id="cg281" x1="0" x2="0" y1="0" y2="1"><stop offset="0" stop-color="#fdfdfd"/><stop offset="1" stop-color="#ececec"/></linearGradient></defs>
<rect x="165.0" y="282.0" width="135.5" height="16.5" fill="url(#cg281)" stroke="#adadad" stroke-width="1" rx="2" />
<text x="167.7" y="293.2" textLength="69.7" lengthAdjust="spacingAndGlyphs" font-size="9.8" font-weight="normal" fill="#1b1b1b" stroke="#1b1b1b" stroke-width="0.12">Normale à l'esquisse</text>
<path d="M287.5,288.75 h6 l-3,3z" fill="#9a9a9a"/>
<rect x="26.6" y="304.7" width="8.6" height="9" fill="#ffffff" stroke="#5a5a5a" stroke-width="1" rx="0.8" />
<text x="41" y="312.9" textLength="65.8" lengthAdjust="spacingAndGlyphs" font-size="9.8" font-weight="normal" fill="#1b1b1b" stroke="#1b1b1b" stroke-width="0.12">Afficher la direction</text>
<rect x="26.6" y="321.7" width="8.6" height="9" fill="#ffffff" stroke="#5a5a5a" stroke-width="1" rx="0.8" />
<path d="M28.5,326.4 l2,2.6 l3.5,-5.6" fill="none" stroke="#1a1a1a" stroke-width="1.2"/>
<text x="41.6" y="330.2" textLength="146.2" lengthAdjust="spacingAndGlyphs" font-size="9.8" font-weight="normal" fill="#1b1b1b" stroke="#1b1b1b" stroke-width="0.12">Longueur le long de la normale à l'esquisse</text>
<text x="16" y="358.2" textLength="62.6" lengthAdjust="spacingAndGlyphs" font-size="9.8" font-weight="normal" fill="#1b1b1b" stroke="#1b1b1b" stroke-width="0.12">Angle de dépouille</text>
<rect x="165.0" y="347.0" width="144" height="18" fill="#ffffff" stroke="#adadad" stroke-width="1" rx="1.5" />
<line x1="299.0" y1="347.5" x2="299.0" y2="364.5" stroke="#d0d0d0" stroke-width="1" />
<line x1="298.5" y1="356.0" x2="308.5" y2="356.0" stroke="#e0e0e0" stroke-width="1" />
<path d="M301.0,353.5 l2.5,-2.5 l2.5,2.5z" fill="#9a9a9a"/><path d="M301.0,358.5 l2.5,2.5 l2.5,-2.5z" fill="#9a9a9a"/>
<circle cx="287.5" cy="351.7" r="3.3" fill="#b9cde6" stroke="#5f84b8" stroke-width="0.9"/><path d="M286.0,351.0 h3 M286.0,352.5 h3" stroke="#5f84b8" stroke-width="0.6"/>
<text x="172.9" y="359" textLength="20.6" lengthAdjust="spacingAndGlyphs" font-size="9.8" font-weight="normal" fill="#1b1b1b" stroke="#1b1b1b" stroke-width="0.12">0,00 °</text>
<line x1="16" y1="369.5" x2="309" y2="369.5" stroke="#e6eef8" stroke-width="1.5" />
<rect x="18.1" y="376.7" width="8.6" height="9" fill="#ffffff" stroke="#5a5a5a" stroke-width="1" rx="0.8" />
<path d="M20,381.4 l2,2.6 l3.5,-5.6" fill="none" stroke="#1a1a1a" stroke-width="1.2"/>
<text x="33" y="384.6" textLength="67.0" lengthAdjust="spacingAndGlyphs" font-size="9.8" font-weight="normal" fill="#1b1b1b" stroke="#1b1b1b" stroke-width="0.12">Mettre à jour la vue</text>
<defs>
<linearGradient id="pipeH" x1="0" y1="0" x2="0.2" y2="1"><stop offset="0" stop-color="#5a5e63"/><stop offset="0.12" stop-color="#6e7278"/><stop offset="0.6" stop-color="#63676d"/><stop offset="1" stop-color="#46494d"/></linearGradient>
<linearGradient id="pipeV" gradientUnits="userSpaceOnUse" x1="624" y1="398" x2="720" y2="432"><stop offset="0" stop-color="#3b3e42"/><stop offset="0.3" stop-color="#4b4e53"/><stop offset="0.7" stop-color="#404347"/><stop offset="1" stop-color="#333639"/></linearGradient>
<linearGradient id="face" x1="0" y1="0" x2="1" y2="1"><stop offset="0" stop-color="#959aa2"/><stop offset="1" stop-color="#8c929a"/></linearGradient>
<radialGradient id="hole" cx="0.35" cy="0.75" r="0.9"><stop offset="0" stop-color="#85898e"/><stop offset="0.55" stop-color="#63676b"/><stop offset="1" stop-color="#3a3d40"/></radialGradient>
<linearGradient id="bendG" x1="0.8" y1="0" x2="0.2" y2="1"><stop offset="0" stop-color="#5f6368"/><stop offset="0.5" stop-color="#52565b"/><stop offset="1" stop-color="#3e4145"/></linearGradient>
<clipPath id="view"><rect x="328" y="91" width="567" height="367"/></clipPath>
</defs>
<g clip-path="url(#view)">
<!-- pipe -->
<path d="M560,208.5 L663,239.5 C690,249 720,268 735,300 C742,318 741,340 733,361 L695,462 L607,462 L608,458 C608,445 610,436 615,429.7 L651.5,337 C650.5,333 648,330 643,327 C630,323 620,319 597.8,310.3 L560,300 Z" fill="url(#pipeV)"/>
<path d="M560,208.5 L663,239.5 C676,244 682,262 681,279 C678,300 668,318 649,326.5 C640,324.5 620,319 597.8,310.3 L560,300 Z" fill="url(#pipeH)"/>
<path d="M663,239.5 C690,249 720,268 735,300 C742,318 741,340 734.5,361 C724,372 708,377 690,374.5 C666,368 658,354 651,336 C668,318 678,300 681,279 C682,262 676,244 663,239.5Z" fill="url(#bendG)"/>
<g fill="none" stroke="#1e2022" stroke-width="1">
<path d="M574,212 L663,239.5 C690,249 720,268 735,300 C742,318 741,340 733,361 L695,458"/>
<path d="M568,303 C580,306 590,308 597.8,310.3 C615,317 630,323 643,327 C648,330 650.5,333 651.5,337 L615,429.7 C610,436 608,445 608,458"/>
<path d="M667,241.5 C680,255 683,268 681,279 C678,300 668,316 651,326"/>
<path d="M652,338 C658,354 666,368 690,374.5 C708,377 724,372 734.5,361"/>
</g>
<g fill="none" stroke="#5a5e63" stroke-width="0.6" opacity="0.8">
<ellipse cx="657" cy="452" rx="44" ry="38" transform="rotate(-20 657 452)"/>
</g>
<!-- flange side face -->
<path d="M532,111.4 Q541,108.3 545,112.5 L555.2,115.4 Q562,117.5 563.2,123 L583,286 Q584.5,297.5 573.5,301.5 L433,351.2 Q426,353.2 421,346 L420.2,345.3 L554.7,296.9 Q566,292.8 564.5,280.9 L544.8,118.5 Q543.3,107 532,111.4Z" fill="#80848a"/>
<path d="M554.7,296.9 Q566,292.8 564.5,280.9 L583,286 Q584.5,297.5 573.5,301.5 L433,351.2 Q426,353.2 421,346 L420.2,345.3Z" fill="#54575c"/>
<path d="M545,112.5 L555.2,115.4 Q562,117.5 563.2,123 L545.1,118.75Z" fill="#63676c"/>
<!-- front face -->
<path d="M391.3,175 Q389.4,160.5 403,156 L532,111.4 Q543.3,107 544.8,118.5 L564.5,280.9 Q566,292.8 554.7,296.9 L420.2,345.3 Q410.8,348.7 409.7,338.8 Z" fill="url(#face)"/>
<!-- faint internal -->
<g fill="none" stroke="#7a7f86" stroke-width="0.7" opacity="0.75">
<ellipse cx="495.7" cy="231" rx="35" ry="42.6" transform="rotate(-8 495.7 231)"/>
<ellipse cx="492" cy="234" rx="33" ry="40" transform="rotate(-8 492 234)"/>
</g>
<path d="M492,189 L561,208 L563,291 L500,274" fill="#a6abb2" opacity="0.24"/>
<path d="M403,156 L532,111.4 Q540,109 541,117 L412,164.5 Q404,167 396,170Z" fill="#a4a9af" opacity="0.35"/>
<g fill="none" stroke="#7b8086" stroke-width="0.7" opacity="0.7">
<path d="M393,173 Q400,176 412,178 M412,165 L541,119.5 M412,165 L412,178 L427.6,337"/>
</g>
<g fill="#a6abb1" fill-opacity="0.45" stroke="#7f848a" stroke-width="0.6" stroke-opacity="0.7">
<path d="M416,169.6 L442.3,178.4 Q450,186 447.8,192 Q444,201 435.8,203.5 L418.4,198"/>
<path d="M520.3,131.6 L546.6,140.4 Q554.3,148 552.1,154 Q548.3,163 540.1,165.5 L522.7,160"/>
<path d="M430.4,294.3 L456.7,303.1 Q464.4,310.7 462.2,316.7 Q458.4,325.7 450.2,328.2 L432.8,322.7"/>
<path d="M535,256.6 L561.3,265.4 L563.5,283 Q558,291 553,290.5 L537.4,285"/>
</g>
<!-- axes -->
<path d="M484,132.7 L495.7,231" stroke="#6aa06a" stroke-width="0.7" opacity="0.8"/>
<path d="M495.7,231 L572,204.8" stroke="#4a56a8" stroke-width="0.7"/>
<path d="M570.5,203.5 L582,201.6 L573,207.2z" fill="#1c1c9c"/>
<!-- outlines -->
<g fill="none" stroke="#1c1d1f" stroke-width="1.1" stroke-linejoin="round">
<path d="M391.3,175 Q389.4,160.5 403,156 L532,111.4 Q543.3,107 544.8,118.5 L564.5,280.9 Q566,292.8 554.7,296.9 L420.2,345.3 Q410.8,348.7 409.7,338.8 Z"/>
<path d="M532,111.4 Q541,108.3 545,112.5 L555.2,115.4 Q562,117.5 563.2,123 L583,286 Q584.5,297.5 573.5,301.5 L433,351.2 Q426,353.2 421,346"/>
<path d="M545.1,118.75 L563.2,123.4"/>
<path d="M564.5,280.9 L583,286.5"/>
</g>
<!-- holes -->
<g stroke="#141516" stroke-width="1.1">
<ellipse cx="418" cy="183" rx="11.8" ry="14.2" fill="url(#hole)" transform="rotate(-12 418 183)"/>
<ellipse cx="522.3" cy="145.7" rx="11.8" ry="14.8" fill="url(#hole)" transform="rotate(-12 522.3 145.7)"/>
<ellipse cx="432.4" cy="308.6" rx="11.8" ry="14.5" fill="url(#hole)" transform="rotate(-12 432.4 308.6)"/>
<ellipse cx="537" cy="271" rx="11.8" ry="14.8" fill="url(#hole)" transform="rotate(-12 537 271)"/>
</g>
<g fill="#ffffff" stroke="#222" stroke-width="0.6">
<path d="M425.5,195 C429,191 431,185 430,180 C427,184 425,190 425.5,195Z"/>
<path d="M529.8,157.5 C533,153 535,147 534,142 C531,146 529,152 529.8,157.5Z"/>
<path d="M440,320.5 C443,316 445,310 444,305 C441,309 439,315 440,320.5Z"/>
<path d="M544.5,283 C548,279 550,273 549,268 C546,272 544,278 544.5,283Z"/>
</g>
</g>
<!-- nav cube -->
<g stroke="#8793a0" stroke-width="0.7" fill="#e3effa" stroke-linejoin="round">
<path d="M836.7,104.3 L844.6,95.6 L853.1,104.3Z"/>
<circle cx="884.7" cy="100.9" r="4.4"/>
<path d="M831,99.8 C825,101.5 819,104.5 814.5,109.8 L812,108.3 L810.2,119.3 L821,116.6 L818.2,114.3 C822.5,110.5 827.5,107.3 832.8,104.6 Z"/>
<path d="M858.2,99.8 C864.2,101.5 870.2,104.5 874.7,109.8 L877.2,108.3 L879,119.3 L868.2,116.6 L871,114.3 C866.7,110.5 861.7,107.3 856.4,104.6 Z"/>
<path d="M799,140.6 L807.9,132.7 L807.9,149.5Z"/>
<path d="M891.2,140.6 L882.3,132.7 L882.3,149.5Z"/>
<path d="M836.7,178.3 L853.1,178.3 L844.6,187.2Z"/>
<path d="M839.7,115.1 L848.7,113.8 L852.6,115.5 L866.8,120.9 L870.6,126 L873.9,148 L870.6,155.7 L866.8,162.2 L852.6,166.7 L844.8,168.6 L835.8,167.4 L825.5,162.2 L819,155.7 L816.5,133.8 L817.7,128.6 L822.9,120.3Z"/>
<path d="M839.7,116.1 L842.9,113.6 L849.3,113.6 L852.5,116.1 L850.8,120.4 L843.4,121Z"/>
<path d="M843.4,121 L850.8,120.4 L852.6,142.2 L845.5,142.8Z"/>
<path d="M845.5,142.8 L852.6,142.2 L857.7,148 L854.5,154.5 L847.4,155.1 L842.3,149.3Z"/>
<path d="M842.3,149.3 L822.9,155.2 M857.7,148 L870.6,152.5 M854.5,154.5 L857,166 M847.4,155.1 L825,161 M823,121 L839.7,117 M852.6,117.5 L866,122 M818,133 L819,155" fill="none"/>
<path d="M869.4,170.4 L876.4,167 L883.3,170.4 V178 L876.4,181.3 L869.4,178Z"/>
<path d="M869.4,170.4 L876.4,173.5 L883.3,170.4 M876.4,173.5 V181.3" fill="none"/>
</g>
<text x="826.5" y="123" font-size="6.2" fill="#7c8792" transform="rotate(80 826.5 123)" textLength="28" lengthAdjust="spacingAndGlyphs">GAUCHE</text>
<text x="854.5" y="135" font-size="7" fill="#7c8792" transform="rotate(8 854.5 135)" textLength="15" lengthAdjust="spacingAndGlyphs">HAUT</text>
<text x="839" y="161" font-size="4" fill="#9aa3ad" transform="rotate(18 839 161)" textLength="16" lengthAdjust="spacingAndGlyphs">DEVANT</text>
<path d="M813.9,166.4 L809.9,132.7" stroke="#52e052" stroke-width="1.1"/>
<path d="M813.9,166.4 L841.6,156.5" stroke="#5a5aee" stroke-width="1.3"/>
<path d="M813.9,166.4 L835.7,173" stroke="#f06060" stroke-width="1.2"/>
<!-- axis indicator -->
<path d="M876.5,440 V430" stroke="#2a9a2a" stroke-width="1"/><path d="M875,432 l1.5,-4 l1.5,4z" fill="#2a9a2a"/>
<path d="M876.5,440 L886,436" stroke="#3a3ad0" stroke-width="1"/><path d="M883,434.5 l5,1 l-3,2.5z" fill="#1a1a90"/>
<path d="M876.5,440 L882,442" stroke="#c03030" stroke-width="1.2"/>
<text x="875.7" y="430" font-size="6.5" fill="#222">Y</text>
<text x="888.5" y="436" font-size="6.5" fill="#222">Z</text>
<text x="883.3" y="442" font-size="6" fill="#222">X</text>

<rect x="159.5" y="206.6" width="155" height="25.3" fill="none" stroke="#e30b0b" stroke-width="3.6"/>
<path d="M337,158.5 L240,219" stroke="#e30b0b" stroke-width="3.5" stroke-linecap="round"/><path d="M237.2,219.3 L243.7,209.2 M237.2,219.3 L249.7,218.3" stroke="#e30b0b" stroke-width="3.5" stroke-linecap="round"/>
<circle cx="354" cy="150.5" r="14.3" fill="#e30b0b"/>
<path d="M355.6,158 V144.2 L350.6,148" fill="none" stroke="#fff" stroke-width="2.1" stroke-linejoin="miter"/>
<circle cx="24.6" cy="120.5" r="14" fill="#e30b0b"/>
<text x="18.8" y="128" textLength="11.6" lengthAdjust="spacingAndGlyphs" font-size="20" font-weight="normal" fill="#fff" >2</text>
<rect x="328.5" y="458.5" width="62.5" height="20.5" fill="#d9d9d9" stroke="#c2c2c2" stroke-width="1" rx="2" />
<g transform="translate(324.8,457.2)"><path d="M8,15.6 V6.9 Q8,5.6 9.3,5.6 H16.4 V7.6" fill="none" stroke="#e8323a" stroke-width="1.4"/><path d="M9.8,15.6 L9.8,8.6 L16.4,7.2 L15.4,9.4 L12.2,9.9 V10.9 L14.9,10.5 L13.9,12.4 L12.2,12.8 V14.4 Z" fill="#3a8ef0"/></g>
<text x="350.3" y="472.2" textLength="16.7" lengthAdjust="spacingAndGlyphs" font-size="9.8" font-weight="normal" fill="#5e5e5e" stroke="#5e5e5e" stroke-width="0.12">Start</text>
<line x1="376.8" y1="465.8" x2="385.3" y2="474.3" stroke="#707070" stroke-width="1.9" />
<line x1="385.3" y1="465.8" x2="376.8" y2="474.3" stroke="#707070" stroke-width="1.9" />
<defs><linearGradient id="tabg" x1="0" x2="0" y1="0" y2="1"><stop offset="0" stop-color="#fdfdfd"/><stop offset="1" stop-color="#f3f3f3"/></linearGradient></defs><path d="M391.5,458.5 V479 q0,2.5 2.5,2.5 H464 q2.5,0 2.5,-2.5 V458.5" fill="url(#tabg)" stroke="#c4c4c4"/>
<path d="M396.5,464.2 h6 l2,2 v9 h-8z" fill="#fbfbfb" stroke="#9a9a9a" stroke-width="0.7"/><path d="M397.5,469 l2.5,-1.5 l2.5,1 v4 l-2.5,1.5 l-2.5,-1z" fill="#2a56a8"/><circle cx="401.8" cy="467.3" r="1.6" fill="#e02020"/>
<text x="413.2" y="473.5" textLength="28.8" lengthAdjust="spacingAndGlyphs" font-size="9.8" font-weight="normal" fill="#111" stroke="#111" stroke-width="0.12">TP9 : 1*</text>
<line x1="452.3" y1="466" x2="460.8" y2="474.5" stroke="#707070" stroke-width="1.9" />
<line x1="460.8" y1="466" x2="452.3" y2="474.5" stroke="#707070" stroke-width="1.9" />
<text x="1.9" y="495.6" textLength="86.8" lengthAdjust="spacingAndGlyphs" font-size="9.8" font-weight="normal" fill="#1a1a1a" stroke="#1a1a1a" stroke-width="0.12">Valid, nom interne : Body</text>
<defs><linearGradient id="cg483" x1="0" x2="0" y1="0" y2="1"><stop offset="0" stop-color="#fdfdfd"/><stop offset="1" stop-color="#ececec"/></linearGradient></defs>
<rect x="646.5" y="483.5" width="62.5" height="18" fill="url(#cg483)" stroke="#adadad" stroke-width="1" rx="2" />
<text x="0" y="0" textLength="0.0" lengthAdjust="spacingAndGlyphs" font-size="9.8" font-weight="normal" fill="#1b1b1b" stroke="#1b1b1b" stroke-width="0.12"></text>
<path d="M700.5,491.0 h6 l-3,3z" fill="#444"/>
<defs><linearGradient id="bsq" x1="0" x2="1" y1="0" y2="1"><stop offset="0" stop-color="#5a8ad0"/><stop offset="1" stop-color="#2858a0"/></linearGradient></defs>
<rect x="648" y="488.5" width="9.5" height="8.3" fill="url(#bsq)" />
<defs><linearGradient id="cg483" x1="0" x2="0" y1="0" y2="1"><stop offset="0" stop-color="#fdfdfd"/><stop offset="1" stop-color="#ececec"/></linearGradient></defs>
<rect x="713.5" y="483.5" width="62.5" height="18" fill="url(#cg483)" stroke="#adadad" stroke-width="1" rx="2" />
<text x="0" y="0" textLength="0.0" lengthAdjust="spacingAndGlyphs" font-size="9.8" font-weight="normal" fill="#1b1b1b" stroke="#1b1b1b" stroke-width="0.12"></text>
<path d="M768.5,491.0 h6 l-3,3z" fill="#444"/>
<circle cx="730.3" cy="489.4" r="1.9" fill="#2a2a2a"/><circle cx="723.8" cy="496.6" r="1.9" fill="#2a2a2a"/><path d="M729,489.6 Q723.2,489.3 722.6,493.2 M725,496.4 Q730.8,496.7 731.4,492.8" stroke="#3a3a3a" fill="none" stroke-width="1.3"/>
<text x="733.9" y="495.8" textLength="26.7" lengthAdjust="spacingAndGlyphs" font-size="9.8" font-weight="normal" fill="#111" stroke="#111" stroke-width="0.12">Gesture</text>
<defs><linearGradient id="cg483" x1="0" x2="0" y1="0" y2="1"><stop offset="0" stop-color="#fdfdfd"/><stop offset="1" stop-color="#ececec"/></linearGradient></defs>
<rect x="781.0" y="483.5" width="101" height="18" fill="url(#cg483)" stroke="#adadad" stroke-width="1" rx="2" />
<text x="0" y="0" textLength="0.0" lengthAdjust="spacingAndGlyphs" font-size="9.8" font-weight="normal" fill="#1b1b1b" stroke="#1b1b1b" stroke-width="0.12"></text>
<path d="M874.0,491.0 h6 l-3,3z" fill="#444"/>
<text x="783.7" y="495.8" textLength="86.1" lengthAdjust="spacingAndGlyphs" font-size="9.8" font-weight="normal" fill="#111" stroke="#111" stroke-width="0.12">230,17 mm x 149,18 mm</text>
<rect x="893.0" y="501.0" width="1" height="1" fill="#aaaaaa" />
<rect x="890.8" y="501.0" width="1" height="1" fill="#aaaaaa" />
<rect x="890.8" y="498.8" width="1" height="1" fill="#aaaaaa" />
<rect x="888.6" y="501.0" width="1" height="1" fill="#aaaaaa" />
<rect x="888.6" y="498.8" width="1" height="1" fill="#aaaaaa" />
<rect x="888.6" y="496.6" width="1" height="1" fill="#aaaaaa" /></svg>
</body></html>
